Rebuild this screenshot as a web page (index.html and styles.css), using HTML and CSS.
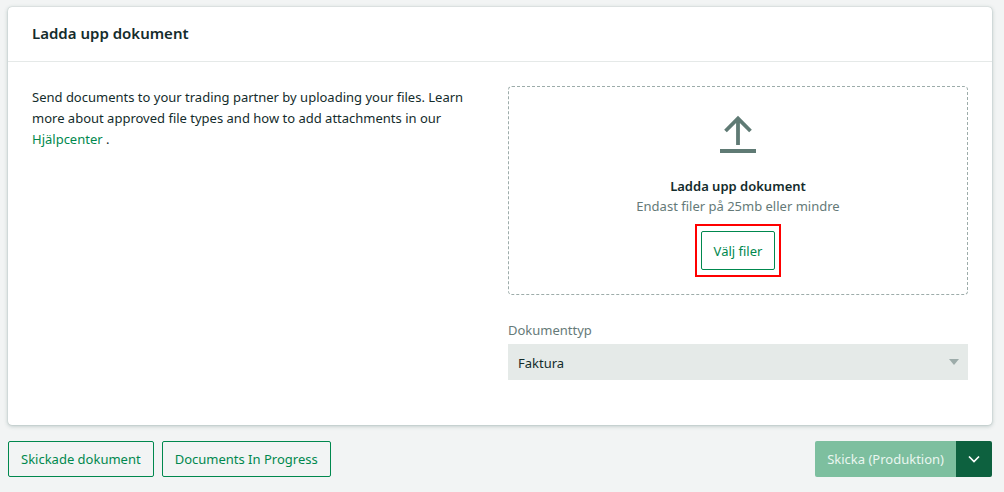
FILE: index.html
```
<!DOCTYPE html>
<html lang="sv">
<head>
    <meta charset="UTF-8">
    <meta name="viewport" content="width=device-width, initial-scale=1.0">
    <title>Ladda upp dokument</title>
    <link rel="stylesheet" href="styles.css">
</head>
<body>

<main class="card">
    <header class="card-header">
        <h1>Ladda upp dokument</h1>
    </header>
    <div class="card-body">
        <p class="intro">
            Send documents to your trading partner by uploading your files. Learn more about approved file types and how to add attachments in our <a href="#">Hjälpcenter</a> .
        </p>
        <div class="upload">
            <div class="dropzone">
                <svg class="upload-icon" viewBox="0 0 48 48" aria-hidden="true">
                    <path d="M24 35V9M11.5 21 24 8.5 36.5 21" fill="none" stroke="currentColor" stroke-width="3.8"/>
                    <path d="M6 39h36v4H6z" fill="currentColor"/>
                </svg>
                <h2>Ladda upp dokument</h2>
                <p>Endast filer på 25mb eller mindre</p>
                <div class="highlight">
                    <button type="button" class="btn btn-choose">Välj filer</button>
                </div>
            </div>
            <label for="doctype">Dokumenttyp</label>
            <div class="select-wrap">
                <select id="doctype" name="doctype">
                    <option>Faktura</option>
                </select>
                <svg class="caret" viewBox="0 0 10 6" aria-hidden="true">
                    <path d="M0 0h10L5 6z" fill="currentColor"/>
                </svg>
            </div>
        </div>
    </div>
</main>

<footer class="actions">
    <button type="button" class="btn">Skickade dokument</button>
    <button type="button" class="btn">Documents In Progress</button>
    <div class="send-group">
        <button type="button" class="btn btn-send" disabled>Skicka (Produktion)</button>
        <button type="button" class="btn btn-toggle" aria-label="Fler alternativ">
            <svg viewBox="0 0 12 8" aria-hidden="true">
                <path d="M1 1.500 6 6.500l5-5" fill="none" stroke="currentColor" stroke-width="1.700"/>
            </svg>
        </button>
    </div>
</footer>

</body>
</html>
```
FILE: styles.css
```
* {
    box-sizing: border-box;
}
body {
    margin: 0;
    padding: 7px 12px 15px 8px;
    background-color: #f2f4f4;
    color: #142c2c;
    font-family: "Segoe UI", "Noto Sans", sans-serif;
    font-size: 13px;
    line-height: 20px;
}
h1, h2, p {
    margin: 0;
}
.card {
    background-color: #fff;
    border-radius: 4px;
    box-shadow: 0 0 1px rgba(40, 80, 75, 0.4), 0 1px 4px rgba(40, 80, 75, 0.3);
}
.card-header {
    padding: 16px 24px 18px;
    border-bottom: 1px solid #e5e9e8;
}
.card-header h1 {
    font-size: 15px;
    font-weight: 600;
    line-height: 20px;
}
.card-body {
    display: grid;
    grid-template-columns: 1fr 1fr;
    gap: 16px;
    padding: 24px 24px 45px;
}
.intro {
    padding-top: 1px;
    line-height: 21px;
}
.intro a {
    color: #00884e;
    text-decoration: none;
}

.dropzone {
    display: flex;
    flex-direction: column;
    align-items: center;
    padding: 23px 16px 17px;
    border: 1px dashed #9dacaa;
    border-radius: 4px;
    text-align: center;
}
.upload-icon {
    width: 48px;
    height: 48px;
    margin-bottom: 18px;
    color: #5f7a74;
}
.dropzone h2 {
    font-size: 13px;
    font-weight: 600;
    line-height: 20px;
}
.dropzone p {
    color: #657a78;
}
.highlight {
    margin-top: 8px;
    padding: 5px 4px;
    border: 2px solid #ff0000;
}

.upload label {
    display: block;
    margin: 25px 0 4px;
    color: #657a78;
}
.select-wrap {
    position: relative;
}
.select-wrap select {
    display: block;
    width: 100%;
    height: 36px;
    padding: 2px 30px 0 10px;
    border: none;
    border-radius: 0;
    background-color: #e5eae8;
    color: #142c2c;
    font: inherit;
    appearance: none;
}
.caret {
    position: absolute;
    top: 15px;
    right: 9px;
    width: 10px;
    height: 6px;
    color: #9dacaa;
    pointer-events: none;
}

.actions {
    display: flex;
    gap: 8px;
    margin-top: 16px;
}
.btn {
    height: 36px;
    padding: 0 12px;
    border: 1px solid #00884e;
    border-radius: 2px;
    background-color: transparent;
    color: #00884e;
    font: inherit;
    cursor: pointer;
}
.btn-choose {
    display: block;
    height: 39px;
    background-color: #fff;
}
.send-group {
    display: flex;
    margin-left: auto;
}
.btn-send {
    border: none;
    border-radius: 2px 0 0 2px;
    background-color: #7dbf9f;
    color: #eaf6f0;
    cursor: default;
}
.btn-toggle {
    display: flex;
    align-items: center;
    justify-content: center;
    width: 36px;
    padding: 0;
    border: none;
    border-radius: 0 2px 2px 0;
    background-color: #0d613f;
    color: #fff;
}
.btn-toggle svg {
    width: 12px;
    height: 8px;
}
```
